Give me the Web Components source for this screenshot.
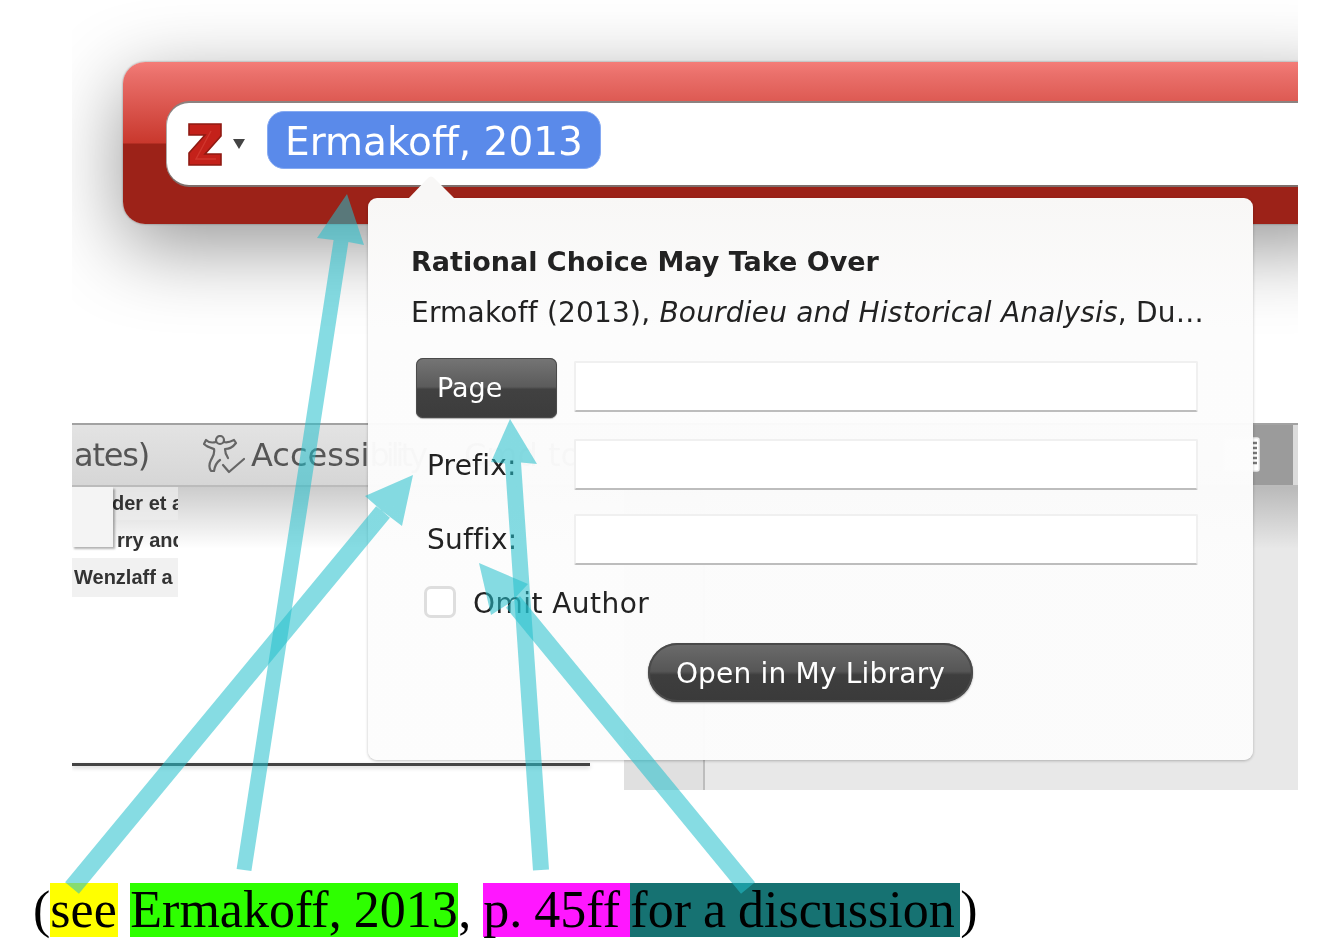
<!DOCTYPE html>
<html>
<head>
<meta charset="utf-8">
<title>Zotero citation dialog</title>
<style>
    html, body { margin: 0; padding: 0; background: #fff; }
    body { width: 1337px; height: 946px; overflow: hidden; position: relative; font-family: "DejaVu Sans", sans-serif; }
</style>
</head>
<body>
<shot-frame>
    <zotero-bar slot="top">
        <citation-token>Ermakoff, 2013</citation-token>
    </zotero-bar>
    <word-toolbar slot="top"></word-toolbar>
    <doc-area slot="top"></doc-area>
    <citation-popup slot="over">
        <span slot="title">Rational Choice May Take Over</span>
        <span slot="source">Ermakoff (2013), <i>Bourdieu and Historical Analysis</i>, Du…</span>
    </citation-popup>
</shot-frame>
<citation-line>(<cite-mark color="#ffff00" width="68">see</cite-mark> <cite-mark color="#2eff00" width="328">Ermakoff, 2013</cite-mark>, <cite-mark color="#ff17ff" width="147">p. 45ff</cite-mark><cite-mark color="#167272" width="330">for a discussion</cite-mark>)</citation-line>
<note-arrows></note-arrows>

<script>
class shotFrame extends HTMLElement {
    constructor() {
        super()
        this.attachShadow({ mode: 'open' });
    };
    connectedCallback() {
        this.shadowRoot.innerHTML = `
            <style>
                :host {
                    display: block;
                    position: relative;
                    width: 1226px;
                    height: 790px;
                    margin-left: 72px;
                    overflow: hidden;
                    background: #fff;
                }
                .flow {
                    display: flex;
                    flex-direction: column;
                    height: 100%;
                }
            </style>
            <div class="flow"><slot name="top"></slot></div>
            <slot name="over"></slot>
        `;
    };
};
customElements.define("shot-frame", shotFrame);

class zoteroBar extends HTMLElement {
    constructor() {
        super()
        this.attachShadow({ mode: 'open' });
    };
    connectedCallback() {
        this.shadowRoot.innerHTML = `
            <style>
                :host {
                    display: block;
                    flex: 0 0 361px;
                    height: 361px;
                    padding-top: 62px;
                    box-sizing: content-box;
                }
                .bar {
                    margin-left: 51px;
                    margin-right: -60px;
                    height: 162px;
                    box-sizing: border-box;
                    padding: 41px 0 39px 44px;
                    border-radius: 22px 0 0 22px;
                    background: linear-gradient(#f47c77 0, #ea706b 12px, #c9382d 81px, #9c2218 82px, #9c2218 100%);
                    box-shadow: 0 22px 80px rgba(0,0,0,.42), 0 0 2px rgba(0,0,0,.45);
                }
                .field {
                    display: flex;
                    align-items: flex-start;
                    height: 82px;
                    box-sizing: border-box;
                    padding-left: 21px;
                    background: #fff;
                    border-radius: 22px 0 0 22px;
                    box-shadow: 0 -2px 0 #8b8280, 0 2px 0 #7d6f6c, -1px 0 0 #b0a9a8;
                    filter: blur(.4px);
                }
                .logo { margin-top: 20px; width: 34px; height: 43px; flex: none; }
                .caret { margin: 36px 22px 0 11px; width: 12px; height: 10px; flex: none; }
            </style>
            <div class="bar">
                <div class="field">
                    <svg class="logo" viewBox="0 0 34 43">
                        <path d="M1 1H33V13L17 31H33V42H1V30L17 12H1Z" fill="#c4211a" stroke="#8f1a12" stroke-width="1.6"/>
                        <path d="M23 8L8 36H28" fill="none" stroke="#d9443a" stroke-width="1.4" opacity=".6"/>
                    </svg>
                    <svg class="caret" viewBox="0 0 12 10"><path d="M0 0H12L6 10Z" fill="#444"/></svg>
                    <slot></slot>
                </div>
            </div>
        `;
    };
};
customElements.define("zotero-bar", zoteroBar);

class citationToken extends HTMLElement {
    constructor() {
        super()
        this.attachShadow({ mode: 'open' });
    };
    connectedCallback() {
        this.shadowRoot.innerHTML = `
            <style>
                :host {
                    display: block;
                    flex: none;
                    margin-top: 8px;
                    width: 334px;
                    height: 58px;
                    box-sizing: border-box;
                    padding-left: 17px;
                    border: 1px solid #86aaf2;
                    border-radius: 17px;
                    background: #5a8aea;
                    color: #fff;
                    font: 39px/59px "DejaVu Sans", sans-serif;
                    white-space: nowrap;
                }
            </style>
            <slot></slot>
        `;
    };
};
customElements.define("citation-token", citationToken);

class wordToolbar extends HTMLElement {
    constructor() {
        super()
        this.attachShadow({ mode: 'open' });
    };
    connectedCallback() {
        this.shadowRoot.innerHTML = `
            <style>
                :host {
                    display: flex;
                    align-items: stretch;
                    flex: 0 0 64px;
                    box-sizing: border-box;
                    border-top: 2px solid #a2a2a2;
                    border-bottom: 2px solid #bbb;
                    background: linear-gradient(#e3e3e3, #d6d6d6);
                    color: #555;
                    font: 32px/60px "DejaVu Sans", sans-serif;
                    filter: blur(.6px);
                }
                .item { display: flex; align-items: center; white-space: nowrap; }
                .first { width: 131px; padding-left: 2px; box-sizing: border-box; letter-spacing: -1.2px; }
                svg.person { width: 42px; height: 40px; margin-right: 6px; }
                .tight { letter-spacing: -4px; }
                .ghost { margin-left: 40px; }
                .right {
                    margin-left: auto;
                    width: 45px;
                    display: flex;
                    background: #9b9b9b;
                    align-items: center;
                }
                .strip { margin-left: auto; width: 5px; height: 100%; background: #dcdcdc; }
                svg.list { margin-left: -30px; width: 37px; height: 35px; flex: none; margin-top: -2px; }
            </style>
            <div class="item first">ates)</div>
            <div class="item">
                <svg class="person" viewBox="0 0 42 40" fill="none" stroke="#666" stroke-width="2.2" stroke-linecap="round" stroke-linejoin="round">
                    <circle cx="17" cy="5" r="4"/>
                    <path d="M13 7C9 8 5 7 3 5L1 9C4 12 8 13 11 14C12 19 10 21 8 25C6 29 6 33 8 36L11 36C12 30 14 27 17 25"/>
                    <path d="M21 7C24 8 27 7 31 5L33 8C30 12 26 14 22 14C22 18 23 20 25 23"/>
                    <path d="M20 30L26 37L41 24"/>
                </svg>
                <span>Accessi<span class="tight">bility</span></span><span class="ghost">Cmd to</span>
            </div>
            <div class="right">
                <svg class="list" viewBox="0 0 37 35">
                    <rect x="1" y="1" width="35" height="33" rx="2" fill="#fff" stroke="#eee" stroke-width="1.5"/>
                    <path d="M28 6H34M28 11H34M28 16H34M28 21H34M28 26H34" stroke="#777" stroke-width="2.4"/>
                </svg>
                <div class="strip"></div>
            </div>
        `;
    };
};
customElements.define("word-toolbar", wordToolbar);

class docArea extends HTMLElement {
    constructor() {
        super()
        this.attachShadow({ mode: 'open' });
    };
    connectedCallback() {
        const fade = "linear-gradient(rgba(0,0,0,.2), rgba(0,0,0,0) 62px)";
        this.shadowRoot.innerHTML = `
            <style>
                :host {
                    display: grid;
                    grid-template-columns: 552px 81px 1fr;
                    flex: 1;
                    min-height: 0;
                }
                .page {
                    display: flex;
                    flex-direction: column;
                    position: relative;
                    background: ${fade}, #fff;
                }
                .rows { width: 106px; overflow: hidden; filter: blur(.5px); }
                .row {
                    color: #333;
                    font: bold 20px/32px "Liberation Sans", sans-serif;
                    white-space: nowrap;
                    overflow: hidden;
                    box-sizing: border-box;
                }
                .row.shade { background: rgba(236,236,236,.75); }
                .row.a { padding-left: 40px; height: 33px; }
                .row.b { padding-left: 45px; height: 38px; line-height: 40px; }
                .row.c { padding-left: 2px; height: 39px; line-height: 38px; }
                .thumb {
                    position: absolute;
                    left: 0;
                    top: 0;
                    width: 41px;
                    height: 60px;
                    background: #f4f4f4;
                    box-shadow: 2px 2px 2px rgba(0,0,0,.3);
                }
                .rule {
                    margin-top: auto;
                    margin-bottom: 24px;
                    width: 518px;
                    height: 3px;
                    background: #444;
                    box-shadow: 0 2px 4px rgba(0,0,0,.18);
                }
                .gutter { background: ${fade}, #e0e0e0; border-right: 2px solid #bdbdbd; }
                .rest { background: ${fade}, #e8e8e8; }
            </style>
            <div class="page">
                <div class="rows">
                    <div class="row a shade">der et al</div>
                    <div class="row b">rry and</div>
                    <div class="row c shade">Wenzlaff a</div>
                </div>
                <div class="thumb"></div>
                <div class="rule"></div>
            </div>
            <div class="gutter"></div>
            <div class="rest"></div>
        `;
    };
};
customElements.define("doc-area", docArea);

class citationPopup extends HTMLElement {
    constructor() {
        super()
        this.attachShadow({ mode: 'open' });
    };
    connectedCallback() {
        this.render();
    };
    getStyles() {
        return `
            <style>
                :host {
                    display: block;
                    position: absolute;
                    left: 296px;
                    top: 198px;
                    width: 885px;
                    height: 562px;
                    color: #222;
                    font: 28px/36px "DejaVu Sans", sans-serif;
                    letter-spacing: .2px;
                }
                .box {
                    box-sizing: border-box;
                    height: 100%;
                    padding: 46px 55px 0 43px;
                    border-radius: 9px;
                    background: linear-gradient(#f8f7f6, #fcfcfc 130px, rgba(252,252,252,.97) 220px);
                    box-shadow: 0 1px 3px rgba(0,0,0,.25);
                }
                .tip {
                    position: absolute;
                    left: 40px;
                    top: -23px;
                    width: 47px;
                    height: 24px;
                    fill: #f8f7f6;
                }
                .title { font-size: 27px; font-weight: bold; white-space: nowrap; letter-spacing: 0; }
                .source { margin-top: 15px; white-space: nowrap; }
                .fields {
                    display: grid;
                    grid-template-columns: 163px 1fr;
                    grid-template-rows: 60px 54px 51px;
                    row-gap: 21px;
                    margin-top: 27px;
                }
                .label { padding-left: 16px; align-self: center; }
                .input {
                    height: 51px;
                    box-sizing: border-box;
                    align-self: start;
                    background: #fff;
                    border: 2px solid #f0f0f0;
                    border-bottom: 2px solid #bdbdbd;
                    border-radius: 2px;
                }
                .input.first { margin-top: 3px; }
                .page-btn {
                    margin-left: 5px;
                    width: 141px;
                    height: 60px;
                    box-sizing: border-box;
                    padding-left: 21px;
                    border-radius: 7px;
                    background: linear-gradient(#757575, #5b5b5b 48%, #414141 52%, #3c3c3c);
                    box-shadow: inset 0 0 0 1px #4b4b4b, 0 1px 1px rgba(0,0,0,.3);
                    color: #fff;
                    font-size: 27px;
                    line-height: 60px;
                    letter-spacing: 0;
                }
                .check {
                    display: flex;
                    align-items: center;
                    margin: 21px 0 0 13px;
                    height: 32px;
                    letter-spacing: .45px;
                }
                .check span { position: relative; top: 2px; }
                .box-mark {
                    width: 32px;
                    height: 32px;
                    box-sizing: border-box;
                    margin-right: 17px;
                    border: 3px solid #dedede;
                    border-radius: 7px;
                    background: #fff;
                }
                .open {
                    display: block;
                    margin: 25px auto 0 237px;
                    width: 325px;
                    height: 59px;
                    box-sizing: border-box;
                    text-align: center;
                    border-radius: 30px;
                    background: linear-gradient(#6c6c6c, #565656 48%, #3e3e3e 54%, #3a3a3a);
                    box-shadow: inset 0 0 0 2px #4a4a4a, 0 1px 2px rgba(0,0,0,.35);
                    color: #fff;
                    line-height: 61px;
                    white-space: nowrap;
                }
                .soft { filter: blur(.4px); }
            </style>
        `;
    };
    render() {
        this.shadowRoot.innerHTML = `
            ${this.getStyles()}
            <svg class="tip" viewBox="0 0 47 24"><path d="M0 24L20 3Q23 0 26 3L47 24Z"/></svg>
            <div class="box">
                <div class="soft">
                    <div class="title"><slot name="title"></slot></div>
                    <div class="source"><slot name="source"></slot></div>
                    <div class="fields">
                        <div class="page-btn">Page</div><div class="input first"></div>
                        <div class="label">Prefix:</div><div class="input"></div>
                        <div class="label">Suffix:</div><div class="input"></div>
                    </div>
                    <div class="check"><div class="box-mark"></div><span>Omit Author</span></div>
                    <div class="open">Open in My Library</div>
                </div>
            </div>
        `;
    };
};
customElements.define("citation-popup", citationPopup);

class citationLine extends HTMLElement {
    constructor() {
        super()
        this.attachShadow({ mode: 'open' });
    };
    connectedCallback() {
        this.shadowRoot.innerHTML = `
            <style>
                :host {
                    display: block;
                    margin-top: 93px;
                    padding-left: 33px;
                    height: 54px;
                    color: #000;
                    font: 52px/54px "Liberation Serif", serif;
                    word-spacing: -1px;
                }
                .line { white-space: pre; }
            </style>
            <div class="line"><slot></slot></div>
        `;
    };
};
customElements.define("citation-line", citationLine);

class citeMark extends HTMLElement {
    constructor() {
        super()
        this.attachShadow({ mode: 'open' });
    };
    static get observedAttributes() {
        return ["color", "width"];
    };
    attributeChangedCallback(nowValue, oldValue, newValue) {
        if(newValue !== oldValue) {
            this[nowValue] = newValue;
        };
    };
    connectedCallback() {
        this.shadowRoot.innerHTML = `
            <style>
                :host {
                    display: inline-block;
                    vertical-align: top;
                    height: 54px;
                    width: ${this.width}px;
                    background: ${this.color};
                    white-space: nowrap;
                }
            </style>
            <slot></slot>
        `;
    };
};
customElements.define("cite-mark", citeMark);

class noteArrows extends HTMLElement {
    constructor() {
        super()
        this.attachShadow({ mode: 'open' });
    };
    shape(a) {
        // shaft from tail to neck, then the head corners round the tip
        const dx = a.neck[0] - a.tail[0], dy = a.neck[1] - a.tail[1];
        const len = Math.hypot(dx, dy), w = a.w / 2;
        const nx = -dy / len * w, ny = dx / len * w;
        const p = [
            [a.tail[0] + nx, a.tail[1] + ny],
            [a.neck[0] + nx, a.neck[1] + ny],
            a.c1, a.tip, a.c2,
            [a.neck[0] - nx, a.neck[1] - ny],
            [a.tail[0] - nx, a.tail[1] - ny]
        ];
        return p.map(q => q[0].toFixed(1) + "," + q[1].toFixed(1)).join(" ");
    };
    connectedCallback() {
        const arrows = [
            { tail: [72, 888], neck: [383, 512], tip: [413, 475], c1: [365, 496], c2: [402, 526], w: 18 },
            { tail: [244, 870], neck: [341, 241], tip: [347, 194], c1: [364, 245], c2: [317, 238], w: 15 },
            { tail: [541, 870], neck: [513, 463], tip: [510, 419], c1: [537, 464], c2: [491, 462], w: 16 },
            { tail: [748, 888], neck: [513, 602], tip: [479, 563], c1: [491, 615], c2: [528, 584], w: 18 }
        ];
        this.shadowRoot.innerHTML = `
            <style>
                :host {
                    display: block;
                    position: absolute;
                    left: 0;
                    top: 0;
                    width: 1337px;
                    height: 946px;
                    pointer-events: none;
                }
                svg { display: block; }
                polygon { fill: rgb(34,192,204); opacity: .55; }
            </style>
            <svg width="1337" height="946" viewBox="0 0 1337 946">
                ${arrows.map(a => `<polygon points="${this.shape(a)}"/>`).join("")}
            </svg>
        `;
    };
};
customElements.define("note-arrows", noteArrows);
</script>
</body>
</html>
